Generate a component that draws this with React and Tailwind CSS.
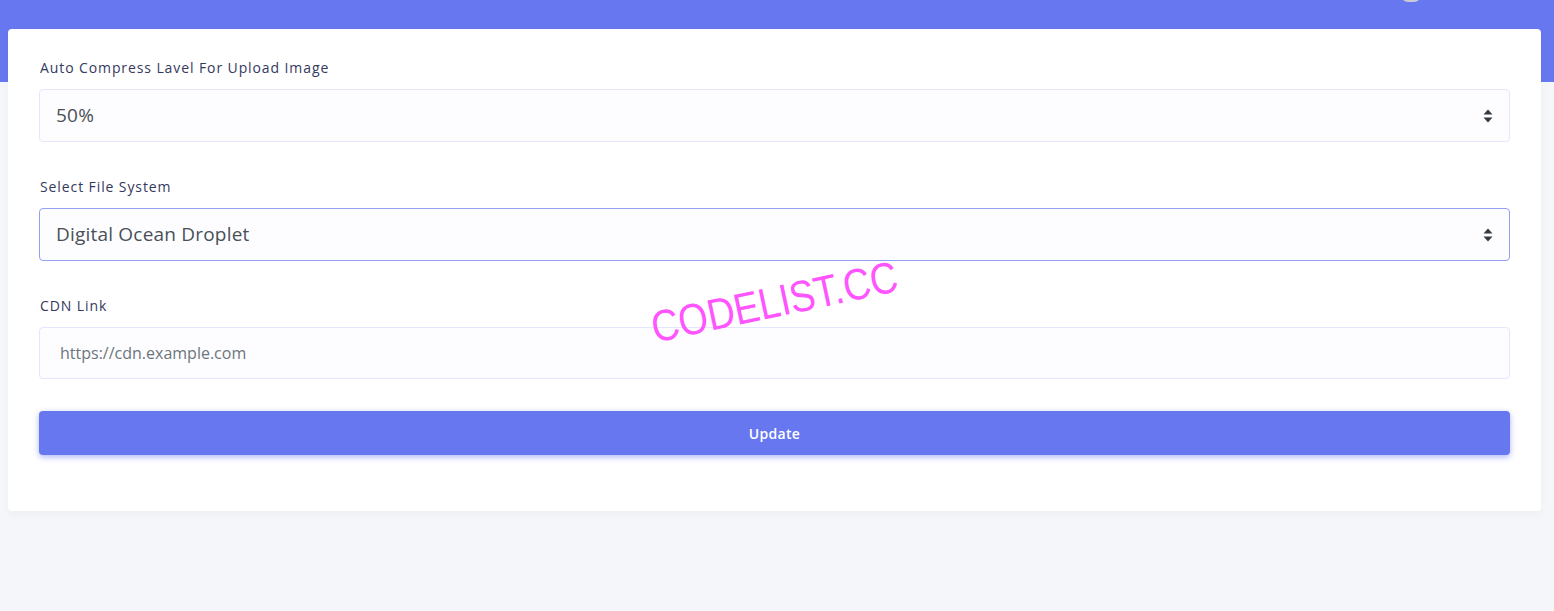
import React from 'react';

const SortArrows = () => (
  <svg width="10" height="14" viewBox="0 0 10 14" className="shrink-0">
    <path d="M5 0.5 L9.5 5.5 H0.5 Z" fill="#343a40" />
    <path d="M5 13.5 L9.5 8.5 H0.5 Z" fill="#343a40" />
  </svg>
);

const Label = ({ children }) => (
  <label className="block text-[14px] leading-[20px] tracking-[0.9px] text-[#34395e] mb-[11px] pl-[1px]">
    {children}
  </label>
);

const FakeSelect = ({ value, focused }) => (
  <div
    className={`flex items-center justify-between h-[53px] rounded-[4px] border bg-[#fdfdff] pl-[16px] pr-[16px] ${
      focused ? 'border-[#95a0f4]' : 'border-[#e4e6fc]'
    }`}
  >
    <span className="text-[19px] tracking-[0.2px] text-[#495057]">{value}</span>
    <SortArrows />
  </div>
);

export default function App() {
  return (
    <div
      className="relative min-h-[611px] bg-[#f4f6f9] overflow-hidden"
      style={{ fontFamily: '"Open Sans", "Noto Sans", sans-serif' }}
    >
      {/* top band */}
      <div className="absolute top-0 left-0 right-0 h-[82px] bg-[#6777ef]">
        <div className="absolute left-[1401px] top-[-12px] w-[20px] h-[14px] rounded-full bg-[#c9cbd6]" />
      </div>

      <div className="relative pt-[29px] px-[8px] pr-[13px]">
        <div className="bg-white rounded-[4px] shadow-[0_4px_8px_rgba(0,0,0,0.03)] pt-[29px] pb-[56px] px-[31px]">
          <Label>Auto Compress Lavel For Upload Image</Label>
          <FakeSelect value="50%" />

          <div className="mt-[35px]">
            <Label>Select File System</Label>
            <FakeSelect value="Digital Ocean Droplet" focused />
          </div>

          <div className="mt-[35px]">
            <Label>CDN Link</Label>
            <div className="flex items-center h-[52px] rounded-[4px] border border-[#e4e6fc] bg-[#fdfdff] pl-[20px]">
              <span className="text-[16px] text-[#6c757d]">https://cdn.example.com</span>
            </div>
          </div>

          <button className="mt-[32px] w-full h-[44px] rounded-[4px] bg-[#6777ef] text-white text-[14px] font-semibold tracking-[0.3px] shadow-[0_2px_6px_#acb5f6]">
            Update
          </button>
        </div>
      </div>

      {/* watermark */}
      <div
        className="absolute left-[652px] top-[306px] text-[44px] leading-none text-[#ff55ff] -rotate-[12deg] scale-x-[0.86] origin-left pointer-events-none"
        style={{ fontFamily: '"Liberation Sans", Arial, sans-serif' }}
      >
        CODELIST.CC
      </div>
    </div>
  );
}
